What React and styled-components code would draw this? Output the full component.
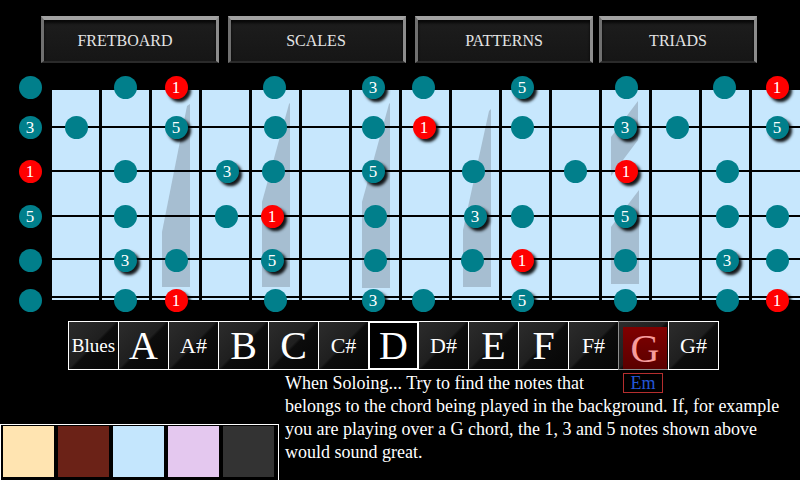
import React from "react";
import styled, { createGlobalStyle } from "styled-components";

const GlobalStyle = createGlobalStyle`
  html, body {
    margin: 0;
    padding: 0;
    background: #000;
  }
  body {
    font-family: "Liberation Serif", "Times New Roman", serif;
  }
`;

const Screen = styled.div`
  width: 800px;
  height: 480px;
  overflow: hidden;
  background: #000;
  color: #fff;
`;

const TabBar = styled.nav`
  display: flex;
  height: 47px;
  padding: 16px 0 0 41px;
`;

const Tab = styled.button`
  width: ${props => props.$w}px;
  height: 47px;
  margin-left: ${props => props.$ml}px;
  padding: 0 ${props => props.$pr}px 0 0;
  box-sizing: border-box;
  background: linear-gradient(#1d1d1d, #161616);
  border-style: solid;
  border-width: 4px 3px 2px 3px;
  border-color: #a2a2a2 #8c8c8c #2a2a2a #707070;
  box-shadow: inset 0 3px 3px rgba(0, 0, 0, 0.75);
  color: #e4e4e4;
  font-family: "Liberation Serif", serif;
  font-size: 16px;
  cursor: pointer;
`;

const Board = styled.div`
  position: relative;
  width: 800px;
  height: 236px;
  margin-top: 13px;
`;

const Neck = styled.svg`
  display: block;
`;

const Dot = styled.div`
  position: absolute;
  width: 23px;
  height: 23px;
  margin: -11.5px 0 0 -11.5px;
  border-radius: 50%;
  background: ${props => (props.$root ? "#ff0000" : "#017f8b")};
  box-shadow: ${props => (props.$label ? "3px 3px 3px rgba(0, 0, 0, 0.9)" : "none")};
  display: flex;
  align-items: center;
  justify-content: center;
  color: #fff;
  font-size: 17px;
  line-height: 1;
`;

const KeyRow = styled.div`
  display: flex;
  margin-top: 9px;
  padding-left: 69px;
`;

const Key = styled.div`
  position: relative;
  z-index: ${props => (props.$selected ? 1 : 0)};
  display: flex;
  width: 51px;
  height: 49px;
  margin-left: -1px;
  box-sizing: border-box;
  padding: ${props => (props.$chord ? "5px 1px 0 4px" : "0")};
  border: ${props =>
    props.$selected ? "2px solid #fff" : props.$chord ? "1px solid #8e8e8e" : "1px solid #fff"};
  background: ${props =>
    props.$selected
      ? "#000"
      : "linear-gradient(135deg, #2c2c2c 0%, #1f1f1f 48%, #0c0c0c 52%, #060606 100%)"};
`;

const KeyFace = styled.span`
  flex: 1;
  display: flex;
  align-items: center;
  justify-content: center;
  font-size: ${props => props.$size}px;
  color: ${props => (props.$chord ? "#f79c9c" : "#fff")};
  background: ${props => (props.$chord ? "linear-gradient(#800000, #5a0000)" : "none")};
`;

const Bottom = styled.div`
  display: flex;
  gap: 6px;
  height: 110px;
`;

const Palette = styled.div`
  display: flex;
  gap: 4px;
  height: 56px;
  margin-top: 54px;
  padding: 1px 4px 0 2px;
  border: 1px solid #fff;
  border-bottom: 0;
`;

const Swatch = styled.div`
  width: 51px;
  height: 51px;
  background: ${props => props.$color};
`;

const Info = styled.div`
  width: 510px;
  margin-top: 2px;
  font-size: 18px;
  line-height: 23px;
  color: #fff;
`;

const InfoHead = styled.div`
  display: flex;
  align-items: flex-start;
`;

const ChordTag = styled.span`
  width: 40px;
  height: 20px;
  margin: 1px 132px 0 auto;
  box-sizing: border-box;
  border: 1px solid #b52e2e;
  color: #2456d6;
  font-size: 18px;
  line-height: 18px;
  text-align: center;
`;

const tabs = [
  { name: "FRETBOARD", w: 178, ml: 0, pr: 10 },
  { name: "SCALES", w: 178, ml: 9, pr: 2 },
  { name: "PATTERNS", w: 178, ml: 9, pr: 0 },
  { name: "TRIADS", w: 158, ml: 6, pr: 0 }
];

// [x, label, root]
const rows = [
  [87, [[30], [125], [176, "1", 1], [274], [373, "3"], [423], [522, "5"], [626], [724], [777, "1", 1]]],
  [127, [[30, "3"], [76], [176, "5"], [275], [373], [424, "1", 1], [522], [625, "3"], [677], [777, "5"]]],
  [171, [[30, "1", 1], [125], [227, "3"], [273], [373, "5"], [473], [575], [626, "1", 1], [727]]],
  [216, [[30, "5"], [125], [226], [272, "1", 1], [375], [475, "3"], [522], [625, "5"], [727], [777]]],
  [260, [[30], [125, "3"], [176], [272, "5"], [375], [472], [522, "1", 1], [625], [727, "3"], [777]]],
  [300, [[30], [125], [176, "1", 1], [275], [373, "3"], [423], [522, "5"], [625], [727], [777, "1", 1]]]
];

const shades = [
  "187,106 190,104 190,287 162,287 162,232",
  "289,104 290,103 290,287 262,287 262,202",
  "389,104 390,103 390,288 362,288 362,202",
  "489,111 491,109 491,287 463,287 463,230",
  "638,101 638,140 611,176 611,137",
  "639,190 639,284 611,284 611,227"
];

const frets = [100, 150, 200, 250, 300, 350, 400, 450, 500, 550, 600, 650, 700, 750];
const strings = [127, 171, 216, 259, 297];

const keys = [
  { name: "Blues", size: 19 },
  { name: "A", size: 40 },
  { name: "A#", size: 22 },
  { name: "B", size: 40 },
  { name: "C", size: 40 },
  { name: "C#", size: 22 },
  { name: "D", size: 40, selected: true },
  { name: "D#", size: 22 },
  { name: "E", size: 40 },
  { name: "F", size: 40 },
  { name: "F#", size: 22 },
  { name: "G", size: 40, chord: true },
  { name: "G#", size: 22 }
];

const colors = ["#ffe4b1", "#6b2217", "#c4e6fd", "#e4c8ef", "#333333"];

export default function App() {
  return (
    <Screen>
      <GlobalStyle />
      <TabBar>
        {tabs.map(t => (
          <Tab key={t.name} $w={t.w} $ml={t.ml} $pr={t.pr}>
            {t.name}
          </Tab>
        ))}
      </TabBar>

      <Board>
        <Neck width="800" height="236" viewBox="0 76 800 236">
          <rect x="52" y="90" width="748" height="210" fill="#c7e7fd" />
          {shades.map(pts => (
            <polygon key={pts} points={pts} fill="#a6bed1" />
          ))}
          {frets.map(x => (
            <rect key={x} x={x - 1} y="90" width="3" height="210" fill="#000" />
          ))}
          {strings.map(y => (
            <rect key={y} x="52" y={y - 1} width="748" height="2" fill="#000" />
          ))}
        </Neck>
        {rows.map(([y, dots]) =>
          dots.map(([x, label, root]) => (
            <Dot
              key={`${y}-${x}`}
              $label={!!label}
              $root={!!root}
              style={{ left: x, top: y - 76 }}
            >
              {label}
            </Dot>
          ))
        )}
      </Board>

      <KeyRow>
        {keys.map(k => (
          <Key key={k.name} $selected={k.selected} $chord={k.chord}>
            <KeyFace $size={k.size} $chord={k.chord}>
              {k.name}
            </KeyFace>
          </Key>
        ))}
      </KeyRow>

      <Bottom>
        <Palette>
          {colors.map(c => (
            <Swatch key={c} $color={c} />
          ))}
        </Palette>
        <Info>
          <InfoHead>
            <span>When Soloing... Try to find the notes that</span>
            <ChordTag>Em</ChordTag>
          </InfoHead>
          <div>
            belongs to the chord being played in the background. If, for example you are playing
            over a G chord, the 1, 3 and 5 notes shown above would sound great.
          </div>
        </Info>
      </Bottom>
    </Screen>
  );
}
